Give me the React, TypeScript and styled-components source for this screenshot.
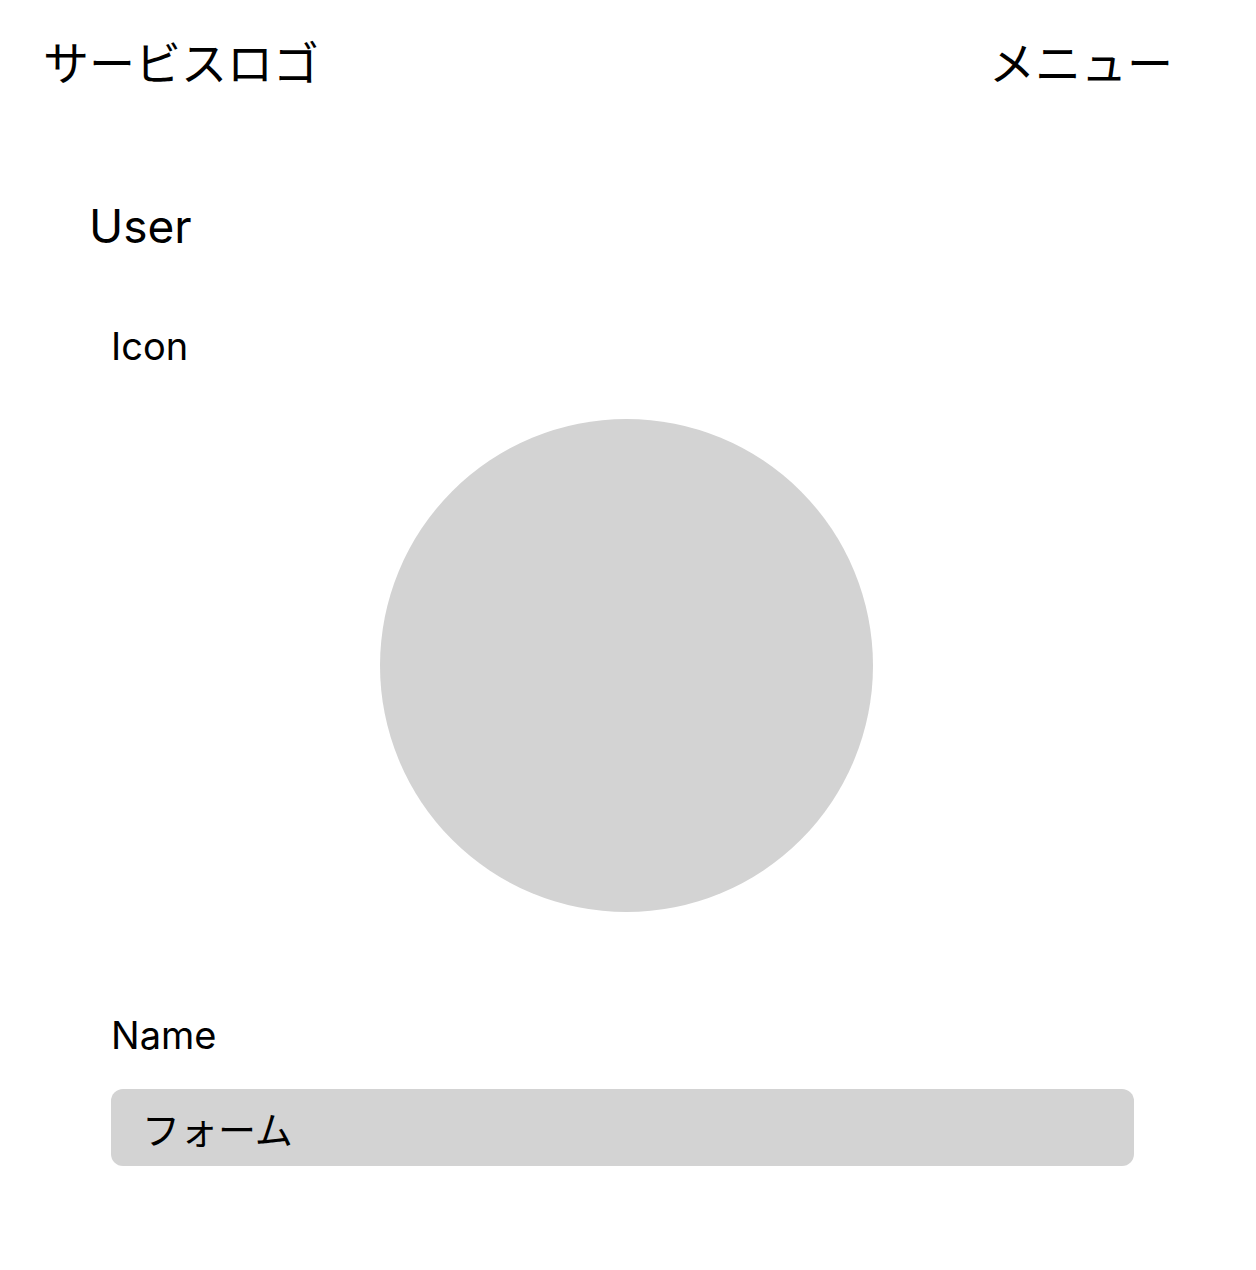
import styled, { createGlobalStyle } from "styled-components";

const GlobalStyle = createGlobalStyle`
  html, body {
    margin: 0;
    padding: 0;
    background: #ffffff;
  }

  body {
    font-family: Inter, "Noto Sans CJK JP", sans-serif;
    color: #000000;
  }
`;

const Header = styled.header`
  display: flex;
  justify-content: space-between;
  align-items: center;
  padding: 30px 83px 0 43px;
  font-size: 46px;
  line-height: 66px;
`;

const Logo = styled.div``;

const Menu = styled.nav``;

const Main = styled.main`
  padding: 0 122px 0 89px;
`;

const PageTitle = styled.h1`
  margin: 102px 0 0;
  font-size: 46px;
  font-weight: 400;
  line-height: 56px;
`;

const Section = styled.section<{ $gap: number }>`
  padding-left: 22px;
  margin-top: ${(p) => p.$gap}px;
`;

const Label = styled.div`
  font-size: 38px;
  line-height: 45px;
`;

const AvatarArea = styled.div`
  display: flex;
  justify-content: center;
  margin: 50px -118px 0 -111px;
`;

const Avatar = styled.div`
  width: 493px;
  height: 493px;
  border-radius: 50%;
  background: #d3d3d3;
`;

const Field = styled.div`
  margin-top: 31px;
  height: 77px;
  box-sizing: border-box;
  padding: 0 31px;
  display: flex;
  align-items: center;
  border-radius: 12px;
  background: #d3d3d3;
  font-size: 38px;
`;

export default function App() {
  return (
    <>
      <GlobalStyle />
      <Header>
        <Logo>サービスロゴ</Logo>
        <Menu>メニュー</Menu>
      </Header>
      <Main>
        <PageTitle>User</PageTitle>
        <Section $gap={70}>
          <Label>Icon</Label>
          <AvatarArea>
            <Avatar />
          </AvatarArea>
        </Section>
        <Section $gap={101}>
          <Label>Name</Label>
          <Field>フォーム</Field>
        </Section>
      </Main>
    </>
  );
}
